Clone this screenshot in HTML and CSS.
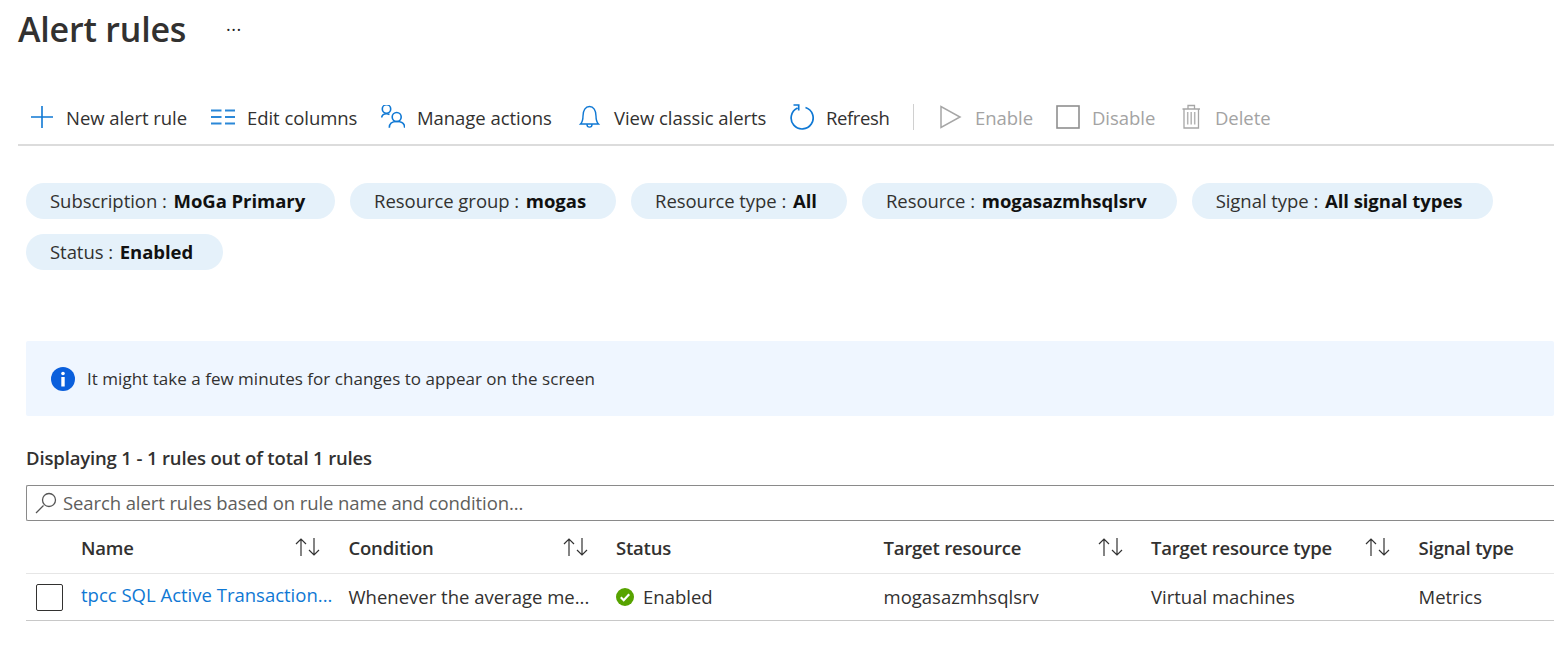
FILE: index.html
```html
<!DOCTYPE html>
<html>

<head>
    <title>Alert rules</title>
    <link rel="stylesheet" href="styles.css">
</head>

<body>
    <div class="title-row">
        <h1>Alert rules</h1>
        <span class="more">&middot;&middot;&middot;</span>
    </div>

    <div class="toolbar">
        <span class="tool t-new">
            <svg width="24" height="24" viewBox="0 0 24 24"><path d="M1 12H23M12 1V23" stroke="#0f78d4" stroke-width="1.6" fill="none"/></svg>
            New alert rule
        </span>
        <span class="tool t-columns">
            <svg width="24" height="24" viewBox="0 0 24 24"><path d="M0 5.500H10.500M14 5.500H24M0 12H10.500M14 12H24M0 18.500H10.500M14 18.500H24" stroke="#2b88d8" stroke-width="2" fill="none"/></svg>
            Edit columns
        </span>
        <span class="tool t-actions">
            <svg width="24" height="24" viewBox="0 0 24 24"><g stroke="#0f78d4" stroke-width="1.6" fill="none"><circle cx="5.500" cy="4" r="4.200"/><path d="M0.700 12.500C1 10 3 8.700 5.500 8.700C6.500 8.700 7.500 8.900 8.500 9.500"/><circle cx="15.700" cy="12" r="4.500"/><path d="M8.300 22.700C8.300 18 11 16.500 15.700 16.500C20 16.500 23.700 18 23.700 22.700"/></g></svg>
            Manage actions
        </span>
        <span class="tool t-classic">
            <svg width="24" height="24" viewBox="0 0 24 24"><path d="M2.500 19H20.500C18.500 17 18 15 18 11C18 5.500 15.500 1.500 11.500 1.500C7.500 1.500 5 5.500 5 11C5 15 4.500 17 2.500 19ZM9 19.500C9 23 14 23 14 19.500" stroke="#0f78d4" stroke-width="1.4" fill="none"/></svg>
            View classic alerts
        </span>
        <span class="tool t-refresh">
            <svg width="24" height="26" viewBox="0 0 24 26"><path d="M15.500 3.500A11 11 0 1 1 7.500 4M3.500 1H8.700V6.500" stroke="#0f78d4" stroke-width="1.700" fill="none"/></svg>
            Refresh
        </span>
        <span class="tool-sep"></span>
        <span class="tool disabled t-enable">
            <svg width="23" height="24" viewBox="0 0 23 24"><path d="M1 1.500V22.500L20 12Z" stroke="#a6a6a6" stroke-width="1.5" fill="none"/></svg>
            Enable
        </span>
        <span class="tool disabled t-disable">
            <svg width="24" height="24" viewBox="0 0 24 24"><rect x="1" y="1" width="22" height="22" stroke="#8f8f8f" stroke-width="1.600" fill="none"/></svg>
            Disable
        </span>
        <span class="tool disabled">
            <svg width="22" height="26" viewBox="0 0 22 26"><path d="M1.500 5H19M7 5V1.500H13.500V5M3 5V24H17.500V5" stroke="#a6a6a6" stroke-width="1.300" fill="none"/><path d="M6.700 8V20.500M10.200 8V20.500M13.700 8V20.500" stroke="#b4b4b4" stroke-width="1.500" fill="none"/></svg>
            Delete
        </span>
    </div>

    <div class="pills">
        <span class="pill">Subscription : <b>MoGa Primary</b></span>
        <span class="pill">Resource group : <b>mogas</b></span>
        <span class="pill">Resource type : <b>All</b></span>
        <span class="pill">Resource : <b>mogasazmhsqlsrv</b></span>
        <span class="pill">Signal type : <b>All signal types</b></span>
        <span class="pill">Status : <b>Enabled</b></span>
    </div>

    <div class="banner">
        <svg width="24" height="24" viewBox="0 0 24 24"><circle cx="12" cy="12" r="12" fill="#0a5fdc"/><circle cx="12" cy="6.500" r="1.800" fill="#fff"/><rect x="10.300" y="10" width="3.400" height="9.500" fill="#fff"/></svg>
        It might take a few minutes for changes to appear on the screen
    </div>

    <div class="count">Displaying 1 - 1 rules out of total 1 rules</div>

    <div class="search">
        <svg width="22" height="22" viewBox="0 0 22 22"><path d="M1 21L8.500 13.500" stroke="#555" stroke-width="1.300"/><circle cx="14" cy="8" r="6.500" stroke="#555" stroke-width="1.300" fill="none"/></svg>
        <span class="search-text">Search alert rules based on rule name and condition...</span>
    </div>

    <div class="grid head">
        <span class="check-cell"></span>
        <span class="cell">Name <i class="sort"><svg width="26" height="20" viewBox="0 0 26 20"><path d="M6 19V2M1 7L6 2L11 7M19 1V18M14 13L19 18L24 13" stroke="#333" stroke-width="1.200" fill="none"/></svg></i></span>
        <span class="cell">Condition <i class="sort"><svg width="26" height="20" viewBox="0 0 26 20"><path d="M6 19V2M1 7L6 2L11 7M19 1V18M14 13L19 18L24 13" stroke="#333" stroke-width="1.200" fill="none"/></svg></i></span>
        <span class="cell">Status</span>
        <span class="cell">Target resource <i class="sort"><svg width="26" height="20" viewBox="0 0 26 20"><path d="M6 19V2M1 7L6 2L11 7M19 1V18M14 13L19 18L24 13" stroke="#333" stroke-width="1.200" fill="none"/></svg></i></span>
        <span class="cell">Target resource type <i class="sort"><svg width="26" height="20" viewBox="0 0 26 20"><path d="M6 19V2M1 7L6 2L11 7M19 1V18M14 13L19 18L24 13" stroke="#333" stroke-width="1.200" fill="none"/></svg></i></span>
        <span class="cell">Signal type</span>
    </div>

    <div class="grid row">
        <span class="check-cell"><span class="check"></span></span>
        <span class="cell link">tpcc SQL Active Transaction...</span>
        <span class="cell">Whenever the average me...</span>
        <span class="cell status">
            <svg width="18" height="18" viewBox="0 0 18 18"><circle cx="9" cy="9" r="9" fill="#57a300"/><path d="M4.800 9.300L7.700 12.200L13.200 6.300" stroke="#fff" stroke-width="2.200" fill="none"/></svg>
            Enabled
        </span>
        <span class="cell">mogasazmhsqlsrv</span>
        <span class="cell">Virtual machines</span>
        <span class="cell">Metrics</span>
    </div>
</body>
</html>
```

FILE: styles.css
```css
html, body {
    overflow: hidden;
}

body {
    margin: 0;
    background: #fff;
    color: #323130;
    font-family: "Open Sans", "Noto Sans", Arial, sans-serif;
    font-size: 18.5px;
    letter-spacing: -0.15px;
    width: 1554px;
    height: 648px;
}

.title-row {
    display: flex;
    align-items: center;
    height: 58px;
    padding-left: 18px;
}

h1 {
    margin: 0;
    font-size: 34px;
    font-weight: 600;
    letter-spacing: -0.2px;
    width: 208px;
}

.more {
    color: #222;
    font-size: 18px;
    letter-spacing: 0.5px;
}

.toolbar {
    display: flex;
    align-items: center;
    height: 54px;
    margin: 32px 0 0 18px;
    padding-left: 12px;
    border-bottom: 2px solid #dcdcdc;
    letter-spacing: -0.05px;
}

.tool {
    display: flex;
    align-items: center;
    gap: 12px;
    flex: none;
    white-space: nowrap;
}

.t-new { width: 181px; }
.t-columns { width: 170px; }
.t-actions { width: 197px; }
.t-classic { width: 212px; }
.t-refresh { width: 124px; letter-spacing: -0.4px; }
.t-enable { width: 116px; }
.t-disable { width: 125px; }

.tool.disabled {
    color: #a3a3a3;
}

.tool-sep {
    width: 1px;
    height: 26px;
    background: #d0d0d0;
    margin-right: 26px;
    margin-left: -1px;
}

.pills {
    display: flex;
    flex-wrap: wrap;
    gap: 15px;
    margin: 37px 0 0 26px;
    height: 87px;
}

.pill {
    height: 36px;
    line-height: 36px;
    padding: 0 30px 0 24px;
    border-radius: 18px;
    background: #e5f1fa;
    white-space: nowrap;
    letter-spacing: -0.05px;
}

.pill b {
    color: #111;
    font-weight: 700;
    margin-left: 2px;
}

.banner {
    display: flex;
    align-items: center;
    gap: 12px;
    height: 75px;
    margin: 71px 0 0 26px;
    padding-left: 25px;
    border-radius: 2px;
    background: #eff6ff;
    font-size: 17px;
    letter-spacing: 0.03px;
}

.count {
    margin: 28px 0 0 26px;
    height: 29px;
    line-height: 27px;
    font-weight: 600;
}

.search {
    display: flex;
    align-items: center;
    gap: 6px;
    height: 34px;
    margin: 12px 0 0 26px;
    padding-left: 8px;
    border: 1px solid #8a8a8a;
    border-right: none;
    border-radius: 2px 0 0 2px;
    color: #605e5c;
    letter-spacing: -0.1px;
}

.search-text {
    margin-bottom: 2px;
}

.grid {
    display: grid;
    grid-template-columns: 55px repeat(5, 267.500px) 1fr;
    margin-left: 26px;
}

.head {
    height: 52px;
    align-items: center;
    border-bottom: 1px solid #e6e6e6;
    font-weight: 600;
    letter-spacing: -0.2px;
}

.row {
    height: 46px;
    align-items: center;
    border-bottom: 1px solid #c8c8c8;
    letter-spacing: 0;
}

.cell {
    display: flex;
    align-items: center;
    white-space: nowrap;
}

.row .cell {
    margin-bottom: 1px;
}

.sort {
    position: absolute;
    margin-left: 214px;
    display: flex;
}

.head .cell {
    position: relative;
}

.row .link {
    color: #0f78d4;
    margin-bottom: 5px;
}

.status {
    gap: 9px;
}

.check-cell {
    display: flex;
    padding-left: 10px;
}

.check {
    width: 27px;
    height: 27px;
    box-sizing: border-box;
    border: 1px solid #323130;
    border-radius: 2px;
}
```
